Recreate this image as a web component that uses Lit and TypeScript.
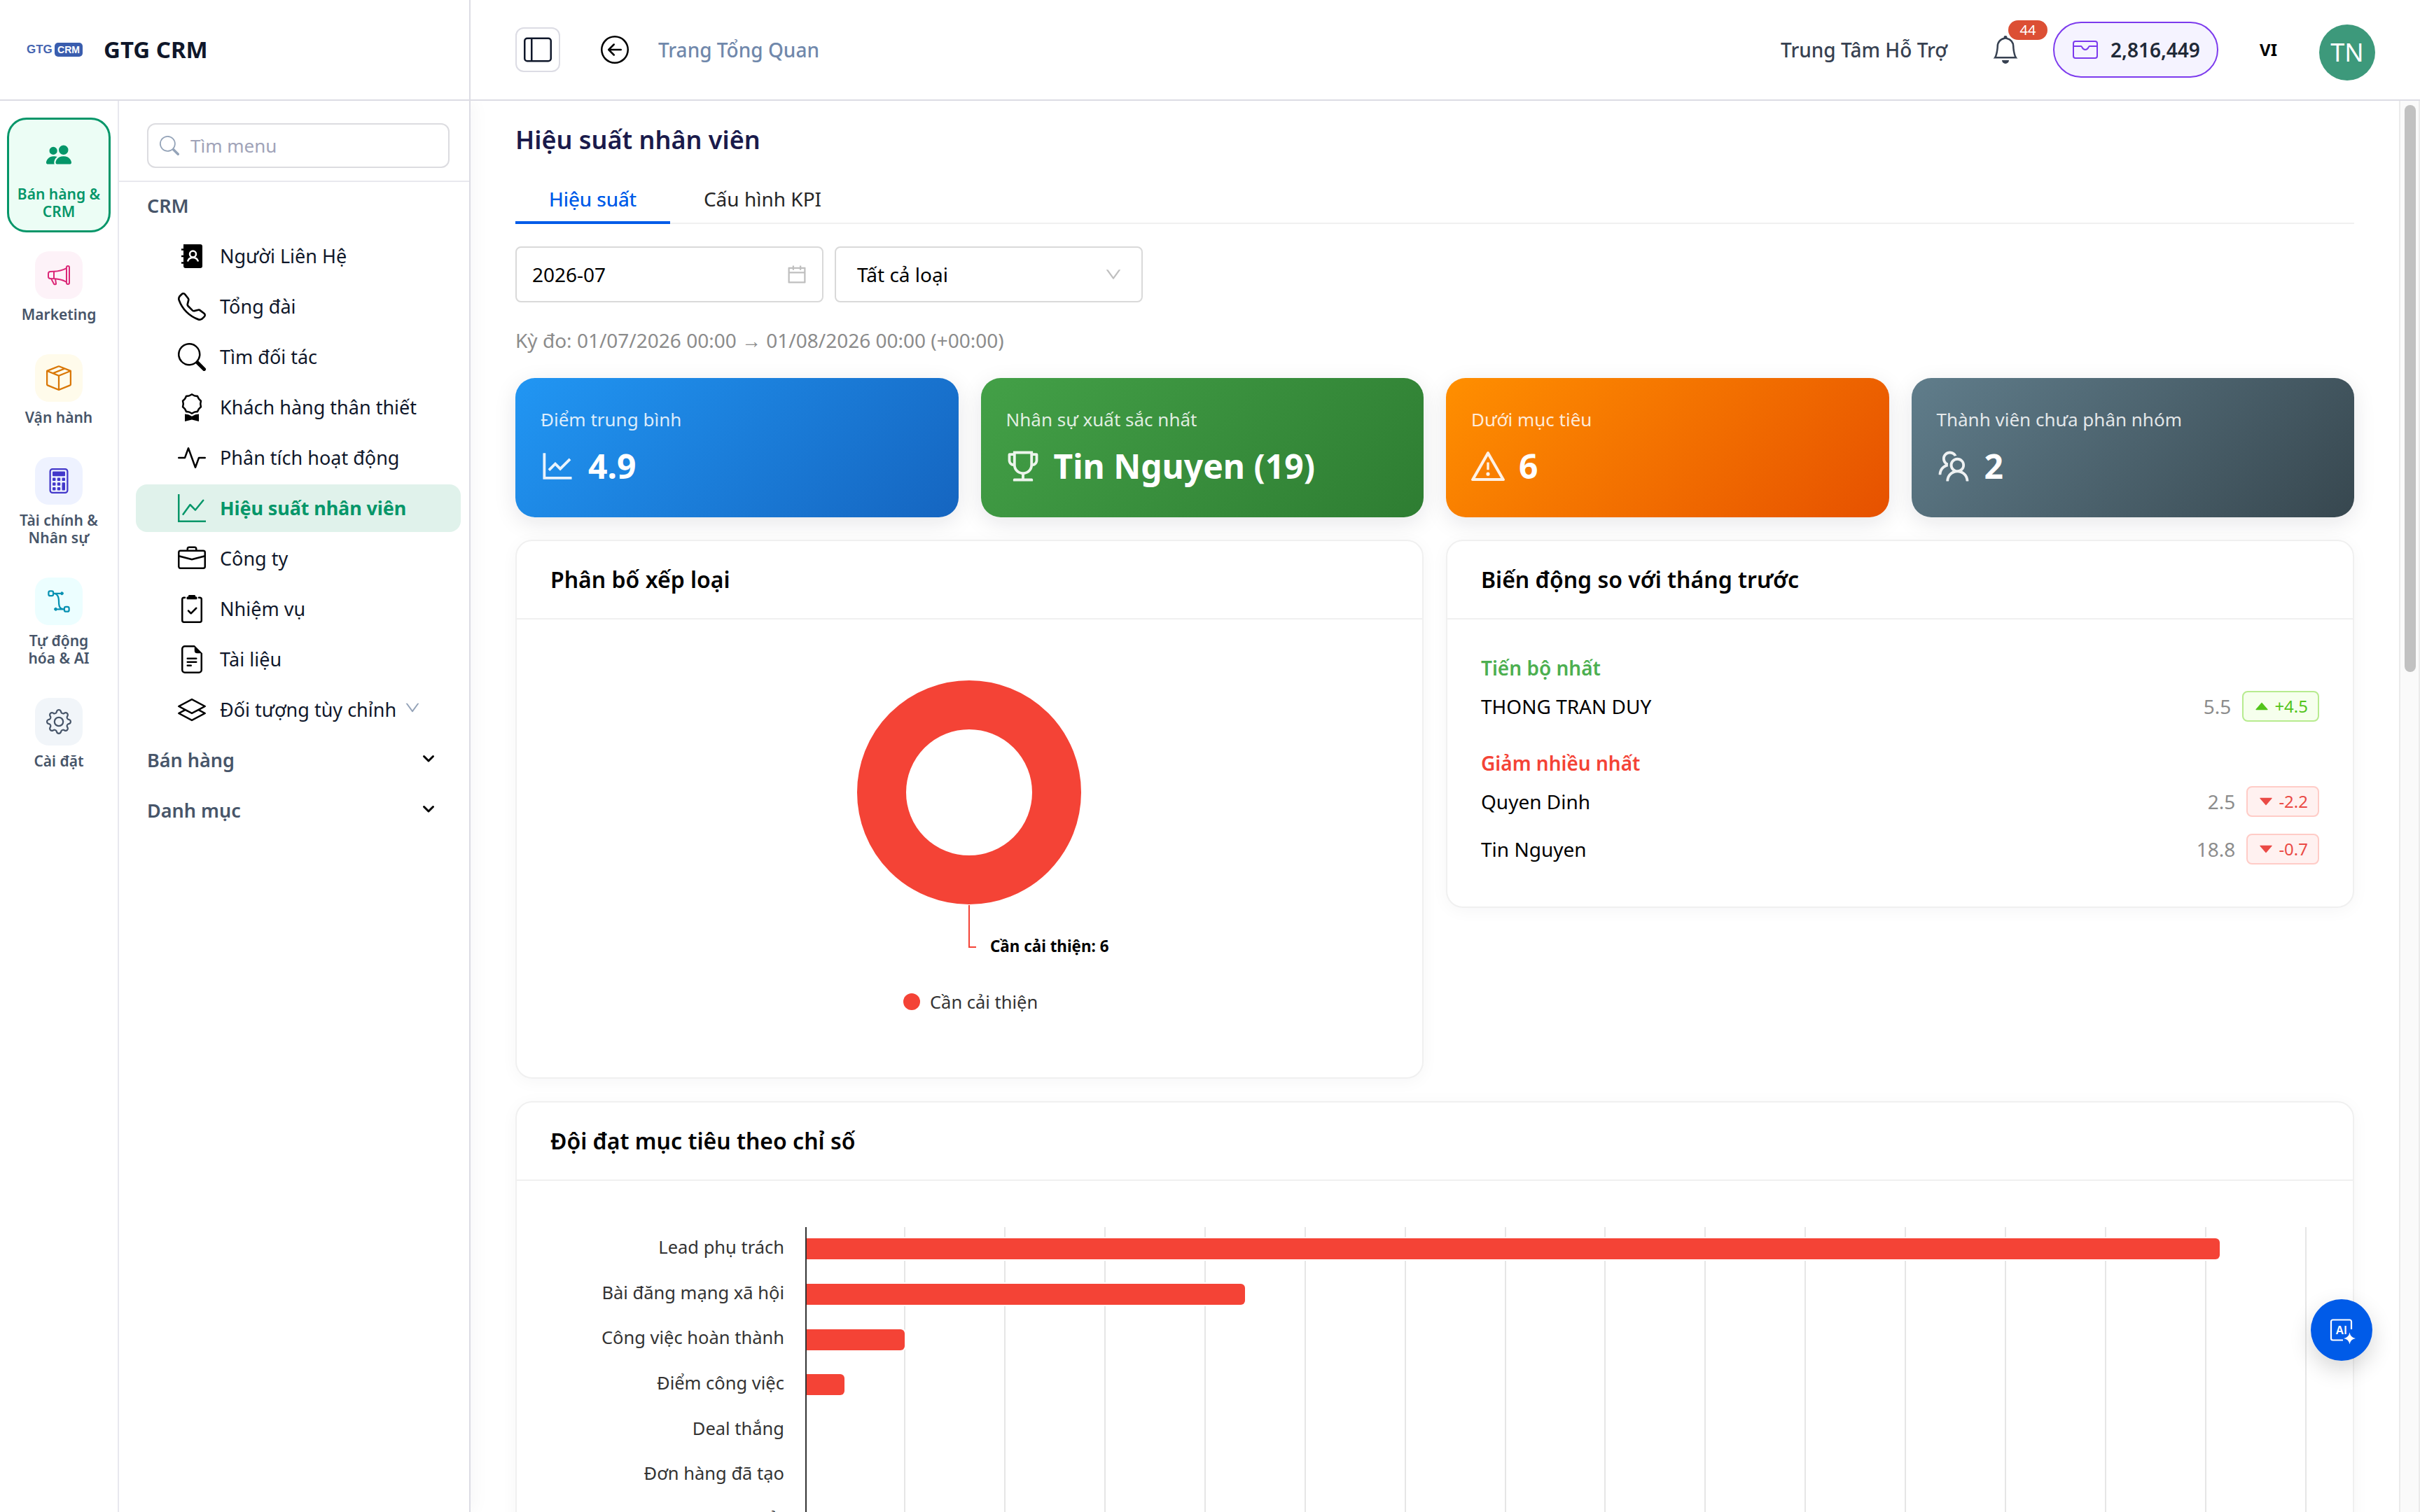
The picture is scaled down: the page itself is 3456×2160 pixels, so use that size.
import {css, html, LitElement, svg} from "lit";
import {customElement, property} from "lit/decorators.js";
import {classMap} from "lit/directives/class-map.js";

// 16x16 outline set
const GLYPHS: Record<string, string> = {
    people: "M7 14s-1 0-1-1 1-4 5-4 5 3 5 4-1 1-1 1zm4-6a3 3 0 1 0 0-6 3 3 0 0 0 0 6m-5.784 6A2.24 2.24 0 0 1 5 13c0-1.355.68-2.75 1.936-3.72A6.3 6.3 0 0 0 5 9c-4 0-5 3-5 4s1 1 1 1zM4.5 8a2.5 2.5 0 1 0 0-5 2.5 2.5 0 0 0 0 5",
    megaphone: "M13 2.5a1.5 1.5 0 0 1 3 0v11a1.5 1.5 0 0 1-3 0v-.214c-2.162-1.241-4.49-1.843-6.912-2.083l.405 2.712A1 1 0 0 1 5.51 15.1h-.548a1 1 0 0 1-.916-.599l-1.85-3.49-.202-.003A2.014 2.014 0 0 1 0 9V7a2.02 2.02 0 0 1 1.992-2.013 75 75 0 0 0 2.483-.075c3.043-.154 6.148-.849 8.525-2.199zm1 0v11a.5.5 0 0 0 1 0v-11a.5.5 0 0 0-1 0m-1 1.35c-2.344 1.205-5.209 1.842-8 2.033v4.233q.27.015.537.036c2.568.189 5.093.744 7.463 1.993zm-9 6.215v-4.13a95 95 0 0 1-1.992.052A1.02 1.02 0 0 0 1 7v2c0 .55.448 1.002 1.006 1.009A61 61 0 0 1 4 10.065m-.657.975 1.609 3.037.01.024h.548l-.002-.014-.443-2.966a68 68 0 0 0-1.722-.082z",
    box: "M8.186 1.113a.5.5 0 0 0-.372 0L1.846 3.5l2.404.961L10.404 2zm3.564 1.426L5.596 5 8 5.961 14.154 3.5zm3.25 1.7-6.5 2.6v7.922l6.5-2.6V4.24zM7.5 14.762V6.838L1 4.239v7.923zM7.443.184a1.5 1.5 0 0 1 1.114 0l7.129 2.852A.5.5 0 0 1 16 3.5v8.662a1 1 0 0 1-.629.928l-7.185 2.874a.5.5 0 0 1-.372 0L.63 13.09a1 1 0 0 1-.63-.928V3.5a.5.5 0 0 1 .314-.464z",
    calculator: "M12 1a1 1 0 0 1 1 1v12a1 1 0 0 1-1 1H4a1 1 0 0 1-1-1V2a1 1 0 0 1 1-1zM4 0a2 2 0 0 0-2 2v12a2 2 0 0 0 2 2h8a2 2 0 0 0 2-2V2a2 2 0 0 0-2-2zM4 2.5a.5.5 0 0 1 .5-.5h7a.5.5 0 0 1 .5.5v2a.5.5 0 0 1-.5.5h-7a.5.5 0 0 1-.5-.5zm0 4a.5.5 0 0 1 .5-.5h1a.5.5 0 0 1 .5.5v1a.5.5 0 0 1-.5.5h-1a.5.5 0 0 1-.5-.5zm0 3a.5.5 0 0 1 .5-.5h1a.5.5 0 0 1 .5.5v1a.5.5 0 0 1-.5.5h-1a.5.5 0 0 1-.5-.5zm0 3a.5.5 0 0 1 .5-.5h1a.5.5 0 0 1 .5.5v1a.5.5 0 0 1-.5.5h-1a.5.5 0 0 1-.5-.5zm3-6a.5.5 0 0 1 .5-.5h1a.5.5 0 0 1 .5.5v1a.5.5 0 0 1-.5.5h-1a.5.5 0 0 1-.5-.5zm0 3a.5.5 0 0 1 .5-.5h1a.5.5 0 0 1 .5.5v1a.5.5 0 0 1-.5.5h-1a.5.5 0 0 1-.5-.5zm0 3a.5.5 0 0 1 .5-.5h1a.5.5 0 0 1 .5.5v1a.5.5 0 0 1-.5.5h-1a.5.5 0 0 1-.5-.5zm3-6a.5.5 0 0 1 .5-.5h1a.5.5 0 0 1 .5.5v1a.5.5 0 0 1-.5.5h-1a.5.5 0 0 1-.5-.5zm0 3a.5.5 0 0 1 .5-.5h1a.5.5 0 0 1 .5.5v4a.5.5 0 0 1-.5.5h-1a.5.5 0 0 1-.5-.5z",
    bezier: "M1 2.5A1.5 1.5 0 0 1 2.5 1h1A1.5 1.5 0 0 1 5 2.5h4.134a1 1 0 1 1 0 1h-2.01q.269.27.484.605C8.246 5.097 8.5 6.459 8.5 8c0 1.993.257 3.092.713 3.7.356.476.895.721 1.787.784A1.5 1.5 0 0 1 12.5 11h1a1.5 1.5 0 0 1 1.5 1.5v1a1.5 1.5 0 0 1-1.5 1.5h-1a1.5 1.5 0 0 1-1.5-1.5H6.866a1 1 0 1 1 0-1h1.711a3 3 0 0 1-.165-.2C7.743 11.407 7.5 10.007 7.5 8c0-1.46-.246-2.597-.733-3.355-.39-.605-.952-1-1.767-1.112A1.5 1.5 0 0 1 3.5 5h-1A1.5 1.5 0 0 1 1 3.5zM2.5 2a.5.5 0 0 0-.5.5v1a.5.5 0 0 0 .5.5h1a.5.5 0 0 0 .5-.5v-1a.5.5 0 0 0-.5-.5zm10 10a.5.5 0 0 0-.5.5v1a.5.5 0 0 0 .5.5h1a.5.5 0 0 0 .5-.5v-1a.5.5 0 0 0-.5-.5z",
    gear: "M8 4.754a3.246 3.246 0 1 0 0 6.492 3.246 3.246 0 0 0 0-6.492M5.754 8a2.246 2.246 0 1 1 4.492 0 2.246 2.246 0 0 1-4.492 0M9.796 1.343c-.527-1.79-3.065-1.79-3.592 0l-.094.319a.873.873 0 0 1-1.255.52l-.292-.16c-1.64-.892-3.433.902-2.54 2.541l.159.292a.873.873 0 0 1-.52 1.255l-.319.094c-1.79.527-1.79 3.065 0 3.592l.319.094a.873.873 0 0 1 .52 1.255l-.16.292c-.892 1.64.901 3.434 2.541 2.54l.292-.159a.873.873 0 0 1 1.255.52l.094.319c.527 1.79 3.065 1.79 3.592 0l.094-.319a.873.873 0 0 1 1.255-.52l.292.16c1.64.893 3.434-.902 2.54-2.541l-.159-.292a.873.873 0 0 1 .52-1.255l.319-.094c1.79-.527 1.79-3.065 0-3.592l-.319-.094a.873.873 0 0 1-.52-1.255l.16-.292c.893-1.64-.902-3.433-2.541-2.54l-.292.159a.873.873 0 0 1-1.255-.52zm-2.633.283c.246-.835 1.428-.835 1.674 0l.094.319a1.873 1.873 0 0 0 2.693 1.115l.291-.16c.764-.415 1.6.42 1.184 1.185l-.159.292a1.873 1.873 0 0 0 1.116 2.692l.318.094c.835.246.835 1.428 0 1.674l-.319.094a1.873 1.873 0 0 0-1.115 2.693l.16.291c.415.764-.42 1.6-1.185 1.184l-.291-.159a1.873 1.873 0 0 0-2.693 1.116l-.094.318c-.246.835-1.428.835-1.674 0l-.094-.319a1.873 1.873 0 0 0-2.692-1.115l-.292.16c-.764.415-1.6-.42-1.184-1.185l.159-.291A1.873 1.873 0 0 0 1.945 8.93l-.319-.094c-.835-.246-.835-1.428 0-1.674l.319-.094A1.873 1.873 0 0 0 3.06 4.377l-.16-.292c-.415-.764.42-1.6 1.185-1.184l.292.159a1.873 1.873 0 0 0 2.692-1.115z",
    phone: "M3.654 1.328a.678.678 0 0 0-1.015-.063L1.605 2.3c-.483.484-.661 1.169-.45 1.77a17.6 17.6 0 0 0 4.168 6.608 17.6 17.6 0 0 0 6.608 4.168c.601.211 1.286.033 1.77-.45l1.034-1.034a.678.678 0 0 0-.063-1.015l-2.307-1.794a.68.68 0 0 0-.58-.122l-2.19.547a1.75 1.75 0 0 1-1.657-.459L5.482 8.062a1.75 1.75 0 0 1-.46-1.657l.548-2.19a.68.68 0 0 0-.122-.58zM1.884.511a1.745 1.745 0 0 1 2.612.163L6.29 2.98c.329.423.445.974.315 1.494l-.547 2.19a.68.68 0 0 0 .178.643l2.457 2.457a.68.68 0 0 0 .644.178l2.189-.547a1.75 1.75 0 0 1 1.494.315l2.306 1.794c.829.645.905 1.87.163 2.611l-1.034 1.034c-.74.74-1.846 1.065-2.877.702a18.6 18.6 0 0 1-7.01-4.42 18.6 18.6 0 0 1-4.42-7.009c-.362-1.03-.037-2.137.703-2.877z",
    search: "M11.742 10.344a6.5 6.5 0 1 0-1.397 1.398h-.001q.044.06.098.115l3.85 3.85a1 1 0 0 0 1.415-1.414l-3.85-3.85a1 1 0 0 0-.115-.1zM12 6.5a5.5 5.5 0 1 1-11 0 5.5 5.5 0 0 1 11 0",
    award: "M9.669.864 8 0 6.331.864l-1.858.282-.842 1.68-1.337 1.32L2.6 6l-.306 1.854 1.337 1.32.842 1.68 1.858.282L8 12l1.669-.864 1.858-.282.842-1.68 1.337-1.32L13.4 6l.306-1.854-1.337-1.32-.842-1.68zm1.196 1.193.684 1.365 1.086 1.072L12.387 6l.248 1.506-1.086 1.072-.684 1.365-1.51.229L8 10.874l-1.355-.702-1.51-.229-.684-1.365-1.086-1.072L3.614 6l-.25-1.506 1.087-1.072.684-1.365 1.51-.229L8 1.126l1.356.702zM4 11.794V16l4-1 4 1v-4.206l-2.018.306L8 13.126 6.018 12.1z",
    activity: "M6 2a.5.5 0 0 1 .47.33L10 12.036l1.53-4.208A.5.5 0 0 1 12 7.5h3.5a.5.5 0 0 1 0 1h-3.15l-1.88 5.17a.5.5 0 0 1-.94 0L6 3.964 4.47 8.171A.5.5 0 0 1 4 8.5H.5a.5.5 0 0 1 0-1h3.15l1.88-5.17A.5.5 0 0 1 6 2",
    graph: "M0 0h1v15h15v1H0zm14.817 3.113a.5.5 0 0 1 .07.704l-4.5 5.5a.5.5 0 0 1-.74.037L7.06 6.767l-3.656 5.027a.5.5 0 0 1-.808-.588l4-5.5a.5.5 0 0 1 .758-.06l2.609 2.61 4.15-5.073a.5.5 0 0 1 .704-.07",
    briefcase: "M6.5 1A1.5 1.5 0 0 0 5 2.5V3H1.5A1.5 1.5 0 0 0 0 4.5v8A1.5 1.5 0 0 0 1.5 14h13a1.5 1.5 0 0 0 1.5-1.5v-8A1.5 1.5 0 0 0 14.5 3H11v-.5A1.5 1.5 0 0 0 9.5 1zm0 1h3a.5.5 0 0 1 .5.5V3H6v-.5a.5.5 0 0 1 .5-.5m1.886 6.914L15 7.151V12.5a.5.5 0 0 1-.5.5h-13a.5.5 0 0 1-.5-.5V7.15l6.614 1.764a1.5 1.5 0 0 0 .772 0M1.5 4h13a.5.5 0 0 1 .5.5v1.616L8.129 7.948a.5.5 0 0 1-.258 0L1 6.116V4.5a.5.5 0 0 1 .5-.5",
    clipboard: "M9.5 0a.5.5 0 0 1 .5.5.5.5 0 0 0 .5.5.5.5 0 0 1 .5.5V2a.5.5 0 0 1-.5.5h-5A.5.5 0 0 1 5 2v-.5a.5.5 0 0 1 .5-.5.5.5 0 0 0 .5-.5.5.5 0 0 1 .5-.5zM3 2.5a.5.5 0 0 1 .5-.5H4a.5.5 0 0 0 0-1h-.5A1.5 1.5 0 0 0 2 2.5v12A1.5 1.5 0 0 0 3.5 16h9a1.5 1.5 0 0 0 1.5-1.5v-12A1.5 1.5 0 0 0 12.5 1H12a.5.5 0 0 0 0 1h.5a.5.5 0 0 1 .5.5v12a.5.5 0 0 1-.5.5h-9a.5.5 0 0 1-.5-.5zM10.854 7.854a.5.5 0 0 0-.708-.708L7.5 9.793 6.354 8.646a.5.5 0 1 0-.708.708l1.5 1.5a.5.5 0 0 0 .708 0z",
    file: "M5.5 7a.5.5 0 0 0 0 1h5a.5.5 0 0 0 0-1zM5 9.5a.5.5 0 0 1 .5-.5h5a.5.5 0 0 1 0 1h-5a.5.5 0 0 1-.5-.5m0 2a.5.5 0 0 1 .5-.5h2a.5.5 0 0 1 0 1h-2a.5.5 0 0 1-.5-.5M9.5 0H4a2 2 0 0 0-2 2v12a2 2 0 0 0 2 2h8a2 2 0 0 0 2-2V4.5zm0 1v2A1.5 1.5 0 0 0 11 4.5h2V14a1 1 0 0 1-1 1H4a1 1 0 0 1-1-1V2a1 1 0 0 1 1-1z",
    layers: "M8.235 1.559a.5.5 0 0 0-.47 0l-7.5 4a.5.5 0 0 0 0 .882L3.188 8 .264 9.559a.5.5 0 0 0 0 .882l7.5 4a.5.5 0 0 0 .47 0l7.5-4a.5.5 0 0 0 0-.882L12.813 8l2.922-1.559a.5.5 0 0 0 0-.882zm3.515 7.008L14.438 10 8 13.433 1.562 10 4.25 8.567l3.515 1.874a.5.5 0 0 0 .47 0zM8 9.433 1.562 6 8 2.567 14.438 6z",
    sidebar: "M0 3a2 2 0 0 1 2-2h12a2 2 0 0 1 2 2v10a2 2 0 0 1-2 2H2a2 2 0 0 1-2-2zm5-1v12h9a1 1 0 0 0 1-1V3a1 1 0 0 0-1-1zM4 2H2a1 1 0 0 0-1 1v10a1 1 0 0 0 1 1h2z",
    back: "M1 8a7 7 0 1 0 14 0A7 7 0 0 0 1 8m15 0A8 8 0 1 1 0 8a8 8 0 0 1 16 0m-4.5-.5a.5.5 0 0 1 0 1H5.707l2.147 2.146a.5.5 0 0 1-.708.708l-3-3a.5.5 0 0 1 0-.708l3-3a.5.5 0 1 1 .708.708L5.707 7.5z",
    bell: "M8 16a2 2 0 0 0 2-2H6a2 2 0 0 0 2 2M8 1.918l-.797.161A4 4 0 0 0 4 6c0 .628-.134 2.197-.459 3.742-.16.767-.376 1.566-.663 2.258h10.244c-.287-.692-.502-1.49-.663-2.258C12.134 8.197 12 6.628 12 6a4 4 0 0 0-3.203-3.92zM14.22 12c.223.447.481.801.78 1H1c.299-.199.557-.553.78-1C2.68 10.2 3 6.88 3 6c0-2.42 1.72-4.44 4.005-4.901a1 1 0 1 1 1.99 0A5 5 0 0 1 13 6c0 .88.32 4.2 1.22 6",
};

// drawn on a 1024 grid with a 64 unit margin
const WIDE_GLYPHS: Record<string, string> = {
    lineChart: "M888 792H200V168c0-4.4-3.6-8-8-8h-56c-4.4 0-8 3.6-8 8v688c0 4.4 3.6 8 8 8h752c4.4 0 8-3.6 8-8v-56c0-4.4-3.6-8-8-8zM305.8 637.7c3.1 3.1 8.1 3.1 11.3 0l138.3-137.6L583 628.5c3.1 3.1 8.2 3.1 11.3 0l275.4-275.3c3.1-3.1 3.1-8.2 0-11.3l-39.6-39.6a8.03 8.03 0 00-11.3 0l-230 229.9L461.4 404a8.03 8.03 0 00-11.3 0L266.3 586.7a8.03 8.03 0 000 11.3l39.5 39.7z",
    trophy: "M868 160h-92v-40c0-4.4-3.6-8-8-8H256c-4.4 0-8 3.6-8 8v40h-92a44 44 0 00-44 44v148c0 81.7 60 149.6 138.2 162C265.7 630.2 359 721.7 476 734.5v105.2H280c-17.7 0-32 14.3-32 32V904c0 4.4 3.6 8 8 8h512c4.4 0 8-3.6 8-8v-32.3c0-17.7-14.3-32-32-32H548V734.5C665 721.7 758.3 630.2 773.8 514 852 501.6 912 433.7 912 352V204a44 44 0 00-44-44zM184 352V232h64v207.6a91.99 91.99 0 01-64-87.6zm520 128c0 49.1-19.1 95.4-53.9 130.1-34.8 34.8-81 53.9-130.1 53.9h-16c-49.1 0-95.4-19.1-130.1-53.9-34.8-34.8-53.9-81-53.9-130.1V184h384v296zm136-128c0 41-26.9 75.8-64 87.6V232h64v120z",
    warning: "M464 720a48 48 0 1096 0 48 48 0 10-96 0zm16-304v184c0 4.4 3.6 8 8 8h48c4.4 0 8-3.6 8-8V416c0-4.4-3.6-8-8-8h-48c-4.4 0-8 3.6-8 8zm475.7 440l-416-720c-6.2-10.7-16.9-16-27.7-16s-21.6 5.3-27.7 16l-416 720C56 877.4 71.4 904 96 904h832c24.6 0 40-26.6 27.7-48zm-783.5-27.9L512 239.9l339.8 588.2H172.2z",
    team: "M824.2 699.9a301.55 301.55 0 00-86.4-60.4C783.1 602.8 812 546.8 812 484c0-110.8-92.4-201.7-203.2-200-109.1 1.7-197 90.6-197 200 0 62.8 29 118.8 74.2 155.5a300.95 300.95 0 00-86.4 60.4C345 754.6 314 826.8 312 903.8a8 8 0 008 8.2h56c4.3 0 7.9-3.4 8-7.7 1.9-58 25.4-112.3 66.7-153.5A226.62 226.62 0 01612 684c60.9 0 118.2 23.7 161.3 66.8C814.6 792 838 846.3 840 904.3c.1 4.3 3.7 7.7 8 7.7h56a8 8 0 008-8.2c-2-77-33-149.2-87.8-203.9zM612 612c-34.2 0-66.4-13.3-90.5-37.5a126.86 126.86 0 01-37.5-91.8c.3-32.8 13.4-64.5 36.3-88 24-24.6 56.1-38.3 90.4-38.7 33.9-.3 66.8 12.9 91 36.6 24.8 24.3 38.4 56.8 38.4 91.4 0 34.2-13.3 66.3-37.5 90.5A127.3 127.3 0 01612 612zM361.5 510.4c-.9-8.7-1.4-17.5-1.4-26.4 0-15.9 1.5-31.4 4.3-46.5.7-3.6-1.2-7.3-4.5-8.8-13.6-6.1-26.1-14.5-36.9-25.1a127.54 127.54 0 01-38.7-95.4c.9-32.1 13.8-62.6 36.3-85.6 24.7-25.3 57.9-39.1 93.2-38.7 31.9.3 62.7 12.6 86 34.4 7.9 7.4 14.7 15.6 20.4 24.4 2 3.1 5.9 4.4 9.3 3.2 17.6-6.1 36.2-10.4 55.3-12.4 5.6-.6 8.8-6.6 6.3-11.6-32.5-64.3-98.9-108.7-175.7-109.9-110.9-1.7-203.3 89.2-203.3 199.9 0 62.8 28.9 118.8 74.2 155.5-31.8 14.7-61.1 35-86.5 60.4-54.8 54.7-85.8 126.9-87.8 204a8 8 0 008 8.2h56.1c4.3 0 7.9-3.4 8-7.7 1.9-58 25.4-112.3 66.7-153.5 29.4-29.4 65.4-49.8 104.7-59.7 3.9-1 6.5-4.7 6-8.7z",
    calendar: "M880 184H712v-64c0-4.4-3.6-8-8-8h-56c-4.4 0-8 3.6-8 8v64H384v-64c0-4.4-3.6-8-8-8h-56c-4.4 0-8 3.6-8 8v64H144c-17.7 0-32 14.3-32 32v664c0 17.7 14.3 32 32 32h736c17.7 0 32-14.3 32-32V216c0-17.7-14.3-32-32-32zm-40 656H184V460h656v380zM184 392V256h128v48c0 4.4 3.6 8 8 8h56c4.4 0 8-3.6 8-8v-48h256v48c0 4.4 3.6 8 8 8h56c4.4 0 8-3.6 8-8v-48h128v136H184z",
    down: "M884 256h-75c-5.1 0-9.9 2.5-12.9 6.6L512 654.2 227.9 262.6c-3-4.1-7.8-6.6-12.9-6.6h-75c-6.5 0-10.3 7.4-6.5 12.7l352.6 486.1c12.8 17.6 39 17.6 51.7 0l352.6-486.1c3.9-5.3.1-12.7-6.4-12.7z",
    caretUp: "M858.9 689L530.5 308.2c-9.4-10.9-27.5-10.9-37 0L165.1 689c-12.2 14.2-1.2 35 18.5 35h656.8c19.7 0 30.7-20.8 18.5-35z",
    caretDown: "M840.4 300H183.6c-19.7 0-30.7 20.8-18.5 35l328.5 380.8c9.4 10.9 27.4 10.9 36.9 0L858.9 335c12.2-14.2 1.2-35-18.5-35z",
};

const RAIL = [
    {label: "Bán hàng & CRM", icon: "people", tone: "green", active: true},
    {label: "Marketing", icon: "megaphone", tone: "pink"},
    {label: "Vận hành", icon: "box", tone: "amber"},
    {label: "Tài chính & Nhân sự", icon: "calculator", tone: "indigo"},
    {label: "Tự động hóa & AI", icon: "bezier", tone: "cyan"},
    {label: "Cài đặt", icon: "gear", tone: "slate"},
];

const MENU = [
    {label: "Người Liên Hệ", icon: "contacts"},
    {label: "Tổng đài", icon: "phone"},
    {label: "Tìm đối tác", icon: "search"},
    {label: "Khách hàng thân thiết", icon: "award"},
    {label: "Phân tích hoạt động", icon: "activity"},
    {label: "Hiệu suất nhân viên", icon: "graph", active: true},
    {label: "Công ty", icon: "briefcase"},
    {label: "Nhiệm vụ", icon: "clipboard"},
    {label: "Tài liệu", icon: "file"},
    {label: "Đối tượng tùy chỉnh", icon: "layers", expandable: true},
];

const KPIS = [
    {label: "Điểm trung bình", value: "4.9", icon: "lineChart", tone: "blue"},
    {label: "Nhân sự xuất sắc nhất", value: "Tin Nguyen (19)", icon: "trophy", tone: "green"},
    {label: "Dưới mục tiêu", value: "6", icon: "warning", tone: "orange"},
    {label: "Thành viên chưa phân nhóm", value: "2", icon: "team", tone: "slate"},
];

const RISERS = [{name: "THONG TRAN DUY", score: "5.5", delta: "+4.5"}];
const FALLERS = [
    {name: "Quyen Dinh", score: "2.5", delta: "-2.2"},
    {name: "Tin Nguyen", score: "18.8", delta: "-0.7"},
];

const AXIS_STEPS = 15;
const METRICS = [
    {label: "Lead phụ trách", value: 14.13},
    {label: "Bài đăng mạng xã hội", value: 4.385},
    {label: "Công việc hoàn thành", value: 0.98},
    {label: "Điểm công việc", value: 0.38},
    {label: "Deal thắng", value: 0},
    {label: "Đơn hàng đã tạo", value: 0},
    {label: "Email đã gửi", value: 0},
];

@customElement("app-icon")
export class AppIcon extends LitElement {
    @property() name = "";

    static styles = css`
      :host {
        display: inline-flex;
        flex: none;
        width: 40px;
        height: 40px;
      }

      svg {
        display: block;
        width: 100%;
        height: 100%;
        fill: currentColor;
      }
    `

    render() {
        if (this.name === "contacts") {
            return html`
                <svg viewBox="0 0 40 40">
                    <path d="M8 3h24a3 3 0 0 1 3 3v28a3 3 0 0 1-3 3H11a3 3 0 0 1-3-3z"/>
                    <path d="M5 10.5h5M5 20h5M5 29.500h5" stroke="currentColor" stroke-width="2.500"/>
                    <circle cx="21.500" cy="17" r="4.500" fill="none" stroke="#fff" stroke-width="2.500"/>
                    <path d="M14 27.500c1-3.500 3.500-5.500 7.500-5.500s6.500 2 7.500 5.500" fill="none" stroke="#fff" stroke-width="2.500"/>
                </svg>
            `
        }
        if (this.name in WIDE_GLYPHS) {
            return html`<svg viewBox="64 64 896 896">${svg`<path d=${WIDE_GLYPHS[this.name]} />`}</svg>`
        }
        return html`<svg viewBox="0 0 16 16">${svg`<path d=${GLYPHS[this.name] ?? ""} />`}</svg>`
    }
}

@customElement("kpi-card")
export class KpiCard extends LitElement {
    @property() label = "";
    @property() value = "";
    @property() icon = "";
    @property({reflect: true}) tone = "blue";

    static styles = css`
      :host {
        display: block;
        box-sizing: border-box;
        height: 199px;
        padding: 37px 36px 36px;
        border-radius: 28px;
        color: #fff;
        background: linear-gradient(135deg, #2196f3, #1565c0);
        box-shadow: 0 8px 32px rgba(15, 23, 42, .1);
      }

      :host([tone="green"]) {
        background: linear-gradient(135deg, #43a047, #2e7d32);
      }

      :host([tone="orange"]) {
        background: linear-gradient(135deg, #ff8f00, #e65100);
      }

      :host([tone="slate"]) {
        background: linear-gradient(135deg, #607d8b, #37474f);
      }

      .label {
        font-size: 26px;
        line-height: 44px;
        color: rgba(255, 255, 255, .85);
      }

      .value {
        display: flex;
        align-items: center;
        gap: 20px;
        margin-top: 9px;
        font-size: 48px;
        line-height: 72px;
        font-weight: 700;
      }

      app-icon {
        width: 48px;
        height: 48px;
        opacity: .9;
      }
    `

    render() {
        return html`
            <div class="label">${this.label}</div>
            <div class="value"><app-icon name=${this.icon}></app-icon>${this.value}</div>
        `
    }
}

@customElement("panel-card")
export class PanelCard extends LitElement {
    @property() heading = "";

    static styles = css`
      :host {
        display: block;
        box-sizing: border-box;
        border: 2px solid #f0f0f0;
        border-radius: 24px;
        background: #fff;
        box-shadow: 0 4px 24px rgba(15, 23, 42, .04);
      }

      .heading {
        padding: 0 48px;
        border-bottom: 2px solid #f0f0f0;
        font-size: 32px;
        line-height: 110px;
        font-weight: 600;
        color: #000;
      }
    `

    render() {
        return html`
            <div class="heading">${this.heading}</div>
            <slot></slot>
        `
    }
}

@customElement("app-root")
export class AppRoot extends LitElement {
    static styles = css`
      :host {
        display: grid;
        grid-template-columns: 672px 1fr;
        grid-template-rows: 144px 2016px;
        height: 2160px;
        overflow: hidden;
        position: relative;
        background: #fff;
        color: #000;
        font-family: "Noto Sans", sans-serif;
        font-size: 28px;
        line-height: 42px;
      }

      * {
        box-sizing: border-box;
      }

      .brand {
        display: flex;
        align-items: center;
        padding-left: 38px;
        border-right: 2px solid #dcdce4;
        border-bottom: 2px solid #dcdce4;
      }

      .logo {
        display: flex;
        align-items: center;
        width: 80px;
        margin-right: 30px;
        font: 700 17px/20px "Liberation Sans", sans-serif;
        color: #4464b0;
      }

      .logo-badge {
        width: 40px;
        margin-left: auto;
        border-radius: 5px;
        text-align: center;
        font-size: 14px;
        color: #fff;
        background: #3a5dae;
      }

      .brand-name {
        font-size: 33px;
        font-weight: 700;
        color: #0f172a;
      }

      .topbar {
        display: flex;
        align-items: center;
        padding: 0 64px;
        border-bottom: 2px solid #dcdce4;
      }

      .toggle {
        display: flex;
        align-items: center;
        justify-content: center;
        width: 64px;
        height: 64px;
        margin-right: 58px;
        border: 2px solid #dcdce4;
        border-radius: 12px;
        color: #0f172a;
      }

      .crumb {
        margin-left: 42px;
        font-weight: 500;
        color: #7088ab;
      }

      .support {
        margin-left: auto;
        font-weight: 500;
        color: #374151;
      }

      .bell {
        display: flex;
        position: relative;
        margin: 0 48px 0 63px;
        color: #374151;
      }

      .bell-count {
        position: absolute;
        left: 24px;
        top: -22px;
        width: 56px;
        border-radius: 14px;
        text-align: center;
        font-size: 20px;
        line-height: 28px;
        color: #fff;
        background: #dc4f34;
      }

      .credits {
        display: flex;
        align-items: center;
        gap: 18px;
        width: 236px;
        height: 80px;
        padding-left: 26px;
        border: 2px solid #7c3aed;
        border-radius: 40px;
        font-weight: 600;
        color: #1f2937;
        background: #f5f3ff;
      }

      .credits svg {
        width: 36px;
        height: 26px;
        fill: none;
        stroke: #7c3aed;
        stroke-width: 2;
      }

      .lang {
        margin: 0 60px 0 59px;
        font-size: 24px;
        font-weight: 700;
      }

      .avatar {
        width: 80px;
        margin-top: 8px;
        border-radius: 50%;
        text-align: center;
        font-size: 36px;
        line-height: 80px;
        color: #fff;
        background: #3d997b;
      }

      .side {
        display: grid;
        grid-template-columns: 170px 1fr;
        border-right: 2px solid #dcdce4;
        background: #fff;
        box-shadow: 4px 0 24px rgba(15, 23, 42, .04);
        clip-path: inset(0 -40px 0 0);
        z-index: 1;
      }

      .rail {
        display: flex;
        flex-direction: column;
        align-items: center;
        gap: 8px;
        padding-top: 24px;
        border-right: 2px solid #e8e8ee;
      }

      .rail-item {
        display: flex;
        flex-direction: column;
        align-items: center;
        gap: 10px;
        width: 148px;
        padding: 16px 9px 14.5px;
        border: 3px solid transparent;
        border-radius: 28px;
        text-align: center;
        font-size: 21px;
        line-height: 24.7px;
        font-weight: 600;
        color: #475569;
      }

      .rail-item.active {
        border-color: #059669;
        color: #059669;
        background: #ecfdf5;
      }

      .rail-icon {
        display: flex;
        align-items: center;
        justify-content: center;
        width: 68px;
        height: 68px;
        border-radius: 20px;
      }

      .rail-icon app-icon {
        width: 36px;
        height: 36px;
      }

      .rail-icon.pink app-icon {
        width: 32px;
        height: 32px;
      }

      .rail-icon.pink {
        color: #db2777;
        background: #fdf2f8;
      }

      .rail-icon.amber {
        color: #d97706;
        background: #fffbeb;
      }

      .rail-icon.indigo {
        color: #4338ca;
        background: #eef2ff;
      }

      .rail-icon.cyan {
        color: #0891b2;
        background: #ecfeff;
      }

      .rail-icon.slate {
        color: #475569;
        background: #f1f5f9;
      }

      .search-wrap {
        height: 116px;
        padding: 32px 28px 0 40px;
        border-bottom: 2px solid #e8e8ee;
      }

      .search {
        display: flex;
        align-items: center;
        gap: 16px;
        height: 64px;
        padding-left: 16px;
        border: 2px solid #dcdce0;
        border-radius: 12px;
        font-size: 26px;
        color: #a0a3b8;
      }

      .search app-icon {
        width: 28px;
        height: 28px;
        color: #94a3b8;
      }

      .menu {
        display: flex;
        flex-direction: column;
        gap: 4px;
        font-size: 27px;
      }

      .group {
        display: flex;
        align-items: center;
        justify-content: space-between;
        height: 68px;
        padding: 0 48px 0 40px;
        font-weight: 600;
        color: #475569;
      }

      .group svg {
        width: 20px;
        height: 20px;
        margin-bottom: 4px;
        fill: none;
        stroke: #000;
        stroke-width: 3;
        stroke-linecap: round;
        stroke-linejoin: round;
      }

      .menu-item {
        display: flex;
        align-items: center;
        height: 68px;
        margin: 0 12px 0 24px;
        padding-left: 60px;
        border-radius: 16px;
        color: #0f172a;
      }

      .menu-item app-icon {
        margin-right: 20px;
        color: #000;
      }

      .menu-item .expand {
        width: 22px;
        height: 22px;
        margin: 0 0 7px 12px;
        color: #94a3b8;
      }

      .menu-item.active {
        font-weight: 700;
        letter-spacing: -.12px;
        color: #059669;
        background: #e0f2eb;
      }

      .menu-item.active app-icon {
        color: #059669;
      }

      .page {
        display: grid;
        grid-template-columns: 1fr 30px;
        overflow: hidden;
      }

      .content {
        display: flex;
        flex-direction: column;
        gap: 32px;
        padding: 28px 64px 0;
        overflow: hidden;
      }

      .scroll {
        padding: 6px;
        border: solid #ebebeb;
        border-width: 0 2px;
        background: #fafafa;
      }

      .thumb {
        width: 16px;
        height: 810px;
        border-radius: 8px;
        background: #c1c1c1;
      }

      .page-title {
        font-size: 36px;
        line-height: 56px;
        font-weight: 600;
        color: #1a1a4b;
      }

      .tabs {
        display: flex;
        height: 72px;
        margin-top: -12px;
        border-bottom: 2px solid #f0f0f0;
      }

      .tab {
        height: 72px;
        padding: 0 48px;
        line-height: 72px;
        color: #262626;
      }

      .tab.active {
        border-bottom: 4px solid #005be8;
        color: #005be8;
        text-shadow: 0 0 .5px currentColor;
      }

      .filters {
        display: flex;
        gap: 16px;
      }

      .field {
        display: flex;
        align-items: center;
        justify-content: space-between;
        width: 440px;
        height: 80px;
        padding: 0 22px;
        border: 2px solid #d9d9d9;
        border-radius: 8px;
      }

      .field.select {
        padding: 0 28px 0 30px;
      }

      .field app-icon {
        width: 28px;
        height: 28px;
        color: #bfbfbf;
      }

      .field.select app-icon {
        width: 24px;
        height: 24px;
      }

      .period {
        height: 44px;
        line-height: 44px;
        color: #8c8c8c;
      }

      .arrow {
        font-family: "Liberation Serif", serif;
        line-height: 1;
      }

      .kpis {
        display: grid;
        grid-template-columns: repeat(4, 1fr);
        gap: 32px;
      }

      .panels {
        display: grid;
        grid-template-columns: 1fr 1fr;
        align-items: start;
        gap: 32px;
      }

      .donut {
        display: block;
        width: 100%;
        height: 654px;
        font-family: "Noto Sans", sans-serif;
      }

      .trend {
        padding: 48px;
      }

      .trend-title {
        font-weight: 600;
        color: #4caf50;
      }

      .trend-title.down {
        margin-top: 26px;
        color: #f44336;
      }

      .trend-row {
        display: flex;
        align-items: center;
        height: 68px;
      }

      .score {
        margin-left: auto;
        color: #8c8c8c;
      }

      .tag {
        display: flex;
        align-items: center;
        gap: 7px;
        height: 44px;
        margin-left: 16px;
        padding: 0 14px 0 15px;
        border: 2px solid #b7eb8f;
        border-radius: 8px;
        font-size: 24px;
        color: #52c41a;
        background: #f6ffed;
      }

      .tag.down {
        border-color: #ffccc7;
        color: #ea4a45;
        background: #fff1f0;
      }

      .tag app-icon {
        width: 22px;
        height: 22px;
      }

      .chart {
        display: grid;
        grid-template-columns: 412px 2144px;
        padding-top: 66px;
      }

      .axis-labels {
        padding-right: 30px;
        text-align: right;
        font-size: 25.5px;
        color: #333;
      }

      .axis-label {
        height: 64.667px;
        line-height: 57px;
      }

      .plot {
        display: grid;
        border-left: 2px solid #333;
      }

      .grid-lines, .bars {
        grid-area: 1 / 1;
      }

      .grid-lines {
        display: grid;
        grid-template-columns: repeat(15, 1fr);
        margin-left: -2px;
      }

      .grid-line {
        border-right: 2px solid #e6e6e6;
      }

      .bar-slot {
        display: flex;
        align-items: center;
        height: 64.667px;
        padding-bottom: 2px;
      }

      .bar {
        height: 30px;
        border-radius: 0 6px 6px 0;
        background: #f44336;
        box-shadow: 0 0 0 2px #fff;
        clip-path: inset(-2px -2px -2px 0);
      }

      .assistant {
        display: flex;
        align-items: center;
        justify-content: center;
        position: absolute;
        left: 3300px;
        top: 1856px;
        width: 88px;
        height: 88px;
        border-radius: 50%;
        background: #005be8;
        box-shadow: 0 12px 32px rgba(0, 0, 0, .16);
      }

      .assistant svg {
        width: 40px;
        height: 40px;
      }
    `

    railItem({label, icon, tone, active}: any) {
        return html`
            <div class=${classMap({"rail-item": true, active: !!active})}>
                <div class="rail-icon ${tone}"><app-icon name=${icon}></app-icon></div>
                <span>${label}</span>
            </div>
        `
    }

    menuItem({label, icon, active, expandable}: any) {
        return html`
            <div class=${classMap({"menu-item": true, active: !!active})}>
                <app-icon name=${icon}></app-icon>
                <span>${label}</span>
                ${expandable ? html`<app-icon class="expand" name="down"></app-icon>` : ""}
            </div>
        `
    }

    group(label: string) {
        return html`
            <div class="group">
                <span>${label}</span>
                <svg viewBox="0 0 20 20"><path d="M3.500 6.500 10 13l6.500-6.500"/></svg>
            </div>
        `
    }

    trendRow({name, score, delta}: any) {
        const down = delta.startsWith("-");
        return html`
            <div class="trend-row">
                <span>${name}</span>
                <span class="score">${score}</span>
                <span class=${classMap({tag: true, down})}>
                    <app-icon name=${down ? "caretDown" : "caretUp"}></app-icon>${delta}
                </span>
            </div>
        `
    }

    donut() {
        return html`
            <svg class="donut" viewBox="0 0 1293 654">
                <circle cx="646" cy="247" r="125" fill="none" stroke="#f44336" stroke-width="70"/>
                <path d="M646 408v60h10" fill="none" stroke="#f44336" stroke-width="2"/>
                <text x="676" y="474.500" font-size="22.400" font-weight="700">Cần cải thiện: 6</text>
                <circle cx="564" cy="546" r="12" fill="#f44336"/>
                <text x="590" y="556" font-size="25.500" fill="#333">Cần cải thiện</text>
            </svg>
        `
    }

    render() {
        return html`
            <div class="brand">
                <div class="logo">GTG<span class="logo-badge">CRM</span></div>
                <div class="brand-name">GTG CRM</div>
            </div>
            <div class="topbar">
                <div class="toggle"><app-icon name="sidebar"></app-icon></div>
                <app-icon name="back"></app-icon>
                <span class="crumb">Trang Tổng Quan</span>
                <span class="support">Trung Tâm Hỗ Trợ</span>
                <div class="bell">
                    <app-icon name="bell"></app-icon>
                    <span class="bell-count">44</span>
                </div>
                <div class="credits">
                    <svg viewBox="0 0 36 26">
                        <rect x="1" y="1" width="34" height="24" rx="3"/>
                        <path d="M1 8h11c1.500 0 1.500 5 6 5s4.500-5 6-5h11"/>
                    </svg>
                    2,816,449
                </div>
                <span class="lang">VI</span>
                <div class="avatar">TN</div>
            </div>
            <div class="side">
                <div class="rail">${RAIL.map(item => this.railItem(item))}</div>
                <div>
                    <div class="search-wrap">
                        <div class="search"><app-icon name="search"></app-icon>Tìm menu</div>
                    </div>
                    <div class="menu">
                        <div class="group">CRM</div>
                        ${MENU.map(item => this.menuItem(item))}
                        ${this.group("Bán hàng")}
                        ${this.group("Danh mục")}
                    </div>
                </div>
            </div>
            <div class="page">
                <div class="content">
                    <div class="page-title">Hiệu suất nhân viên</div>
                    <div class="tabs">
                        <div class="tab active">Hiệu suất</div>
                        <div class="tab">Cấu hình KPI</div>
                    </div>
                    <div class="filters">
                        <div class="field">2026-07<app-icon name="calendar"></app-icon></div>
                        <div class="field select">Tất cả loại<app-icon name="down"></app-icon></div>
                    </div>
                    <div class="period">Kỳ đo: 01/07/2026 00:00 <span class="arrow">→</span> 01/08/2026 00:00 (+00:00)</div>
                    <div class="kpis">
                        ${KPIS.map(k => html`
                            <kpi-card label=${k.label} value=${k.value} icon=${k.icon} tone=${k.tone}></kpi-card>
                        `)}
                    </div>
                    <div class="panels">
                        <panel-card heading="Phân bố xếp loại">${this.donut()}</panel-card>
                        <panel-card heading="Biến động so với tháng trước">
                            <div class="trend">
                                <div class="trend-title">Tiến bộ nhất</div>
                                ${RISERS.map(row => this.trendRow(row))}
                                <div class="trend-title down">Giảm nhiều nhất</div>
                                ${FALLERS.map(row => this.trendRow(row))}
                            </div>
                        </panel-card>
                    </div>
                    <panel-card heading="Đội đạt mục tiêu theo chỉ số">
                        <div class="chart">
                            <div class="axis-labels">
                                ${METRICS.map(m => html`<div class="axis-label">${m.label}</div>`)}
                            </div>
                            <div class="plot">
                                <div class="grid-lines">
                                    ${Array.from({length: AXIS_STEPS}, () => html`<div class="grid-line"></div>`)}
                                </div>
                                <div class="bars">
                                    ${METRICS.map(m => html`
                                        <div class="bar-slot">
                                            ${m.value ? html`<div class="bar" style="width: ${m.value / AXIS_STEPS * 100}%"></div>` : ""}
                                        </div>
                                    `)}
                                </div>
                            </div>
                        </div>
                    </panel-card>
                </div>
                <div class="scroll"><div class="thumb"></div></div>
            </div>
            <div class="assistant">
                <svg viewBox="0 0 40 40">
                    <path d="M34 22V11a2.500 2.500 0 0 0-2.500-2.500h-24A2.500 2.500 0 0 0 5 11v24a2.500 2.500 0 0 0 2.500 2.500H22" transform="translate(0 -3)" fill="none" stroke="#fff" stroke-width="2.200"/>
                    <text x="11.500" y="25.500" font-family="Inter, sans-serif" font-size="16" font-weight="600" fill="#fff">AI</text>
                    <path d="M31.500 23.500q1.200 7.300 8.500 8.500-7.300 1.200-8.500 8.500-1.200-7.300-8.500-8.500 7.300-1.200 8.500-8.500" fill="#fff"/>
                </svg>
            </div>
        `
    }
}
